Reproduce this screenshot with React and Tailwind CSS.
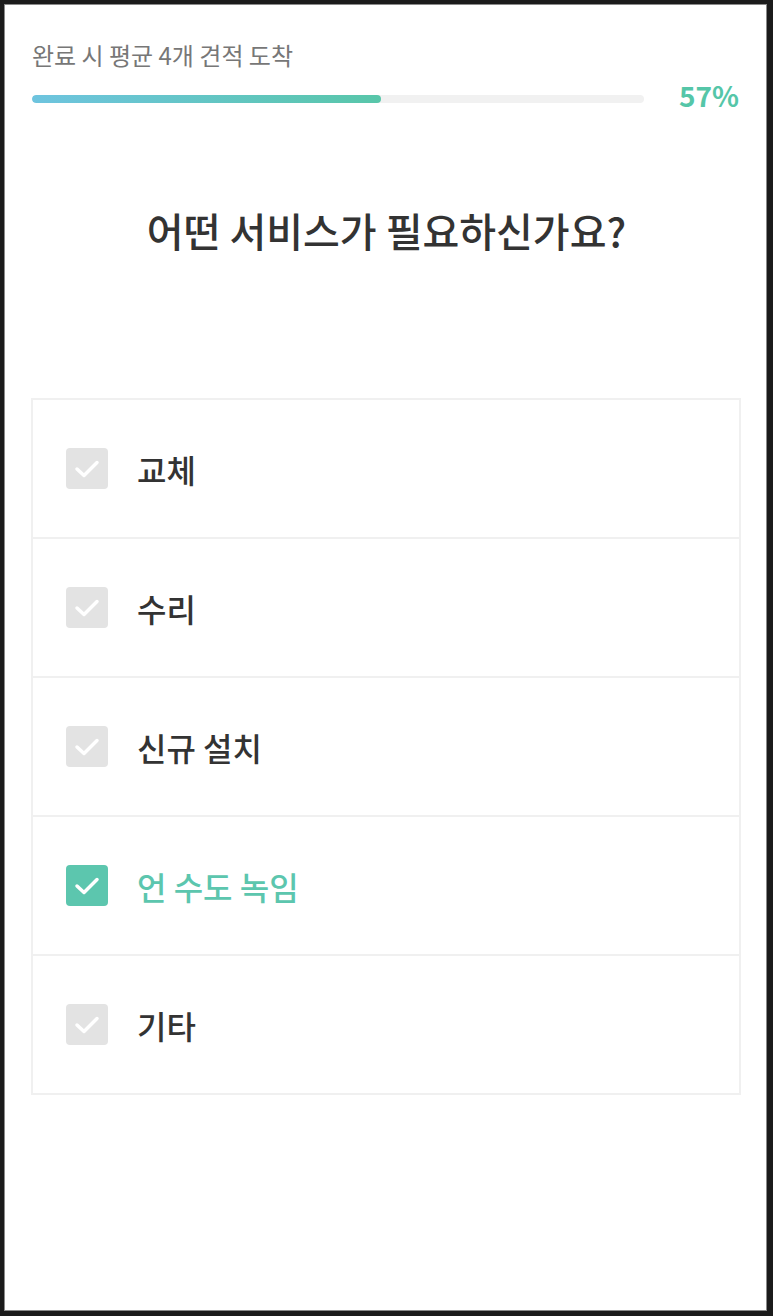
import React, { useState } from 'react';

const OPTIONS = ['교체', '수리', '신규 설치', '언 수도 녹임', '기타'];

function CheckBox({ checked }) {
    return (
        <div className={`w-[42px] h-[41px] rounded-[4px] shrink-0 flex items-center justify-center ${checked ? 'bg-[#5cc6ae]' : 'bg-[#e3e3e3]'}`}>
            <svg width="42" height="41" viewBox="0 0 42 41" fill="none">
                <polyline
                    points="11,21 18,27.5 31,14.5"
                    stroke="white"
                    strokeWidth="3.5"
                    strokeLinecap="round"
                    strokeLinejoin="round"
                />
            </svg>
        </div>
    );
}

function App() {
    const [selected, setSelected] = useState(['언 수도 녹임']);

    const toggle = (opt) => {
        setSelected(prev => prev.includes(opt) ? prev.filter(o => o !== opt) : [...prev, opt]);
    };

    return (
        <div
            className="w-[773px] h-[1316px] bg-[#1b1b1b] pt-[4px] pl-[4px] pr-[6px] pb-[5px]"
            style={{ fontFamily: '"Noto Sans CJK KR", "Noto Sans", sans-serif' }}
        >
            <div className="h-full bg-white border border-[#8a8a8a] pl-[27px] pr-[25px] pt-[35px]">
                {/* Progress */}
                <div className="text-[24px] leading-[30px] text-[#777]">완료 시 평균 4개 견적 도착</div>
                <div className="flex items-center mt-[9px]">
                    <div className="flex-1 h-[8px] rounded-full bg-[#f1f1f1] overflow-hidden">
                        <div className="h-full w-[57%] rounded-full bg-gradient-to-r from-[#6ec4df] to-[#58c6a9]" />
                    </div>
                    <div className="w-[97px] text-right text-[28px] leading-[32px] pb-[7px] pr-[2px] font-semibold text-[#55c6a8]">57%</div>
                </div>

                {/* Question */}
                <h1 className="mt-[88px] text-center text-[40px] leading-[48px] font-medium text-[#333]">
                    어떤 서비스가 필요하신가요?
                </h1>

                {/* Options */}
                <div className="mt-[144px] -ml-px border-2 border-[#f0f0f0]">
                    {OPTIONS.map((opt, i) => {
                        const checked = selected.includes(opt);
                        return (
                            <div
                                key={opt}
                                onClick={() => toggle(opt)}
                                className={`flex items-center pl-[33px] gap-[29px] cursor-pointer ${i > 0 ? 'h-[139px] border-t-2 border-[#f0f0f0]' : 'h-[137px]'}`}
                            >
                                <CheckBox checked={checked} />
                                <span className={`text-[32px] leading-none font-medium ${checked ? 'text-[#5cc6ae]' : 'text-[#333]'}`}>
                                    {opt}
                                </span>
                            </div>
                        );
                    })}
                </div>
            </div>
        </div>
    );
}

export default App;
